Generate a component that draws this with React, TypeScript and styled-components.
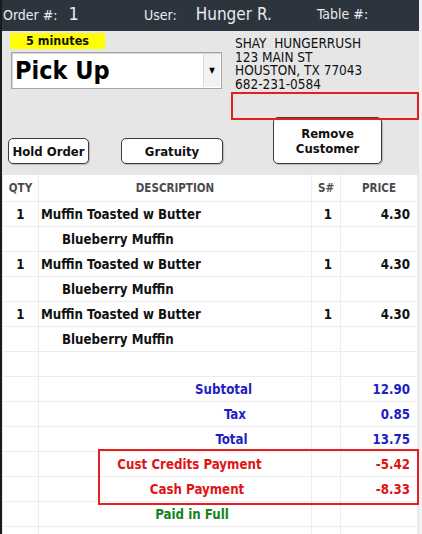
import React from "react";
import styled, { createGlobalStyle } from "styled-components";

const FONT = `"DejaVu Sans Condensed", "DejaVu Sans", Tahoma, sans-serif`;

const GlobalStyle = createGlobalStyle`
  html, body {
    margin: 0;
    padding: 0;
    background: #f2f2f2;
    overflow: hidden;
  }
  body {
    font-family: ${FONT};
    color: #111;
  }
`;

const Frame = styled.div`
  width: 417px;
  height: 534px;
  border-left: 2px solid #1b1b1b;
  background: #e6e6e6;
  display: flex;
  flex-direction: column;
  overflow: hidden;
  & > * {
    flex-shrink: 0;
  }
`;

/* ---------- title bar ---------- */
const TitleBar = styled.div`
  height: 31px;
  background: #2c353e;
  color: #e9ecef;
  display: grid;
  grid-template-columns: 141px 173px 1fr;
  align-items: center;
  padding: 0 0 4px 1px;
  box-sizing: border-box;
`;

const TitleCell = styled.div<{ $gap: number }>`
  display: flex;
  align-items: baseline;
  gap: ${(p) => p.$gap}px;
  white-space: nowrap;
`;

const TitleLabel = styled.span`
  font-size: 14px;
`;

const TitleValue = styled.span<{ $size: number }>`
  font-size: ${(p) => p.$size}px;
`;

/* ---------- order panel ---------- */
const Panel = styled.div`
  padding: 2px 0 0 8px;
  display: flex;
  flex-direction: column;
  height: 144px;
  box-sizing: border-box;
`;

const TopRow = styled.div`
  display: flex;
  align-items: flex-start;
  gap: 13px;
  height: 56px;
`;

const LeftStack = styled.div`
  display: flex;
  flex-direction: column;
  gap: 3px;
  width: 212px;
`;

const TimeBadge = styled.div`
  width: 95px;
  height: 16px;
  background: #ffff00;
  font-weight: bold;
  font-size: 12.5px;
  line-height: 16px;
  text-align: center;
`;

const Combo = styled.div`
  height: 37px;
  margin-left: 1px;
  background: #fff;
  border: 1px solid #a6a6a6;
  box-shadow: inset 1px 1px 0 #d4d4d4;
  display: flex;
  align-items: stretch;
  box-sizing: border-box;
`;

const ComboText = styled.div`
  flex: 1;
  font-size: 25px;
  font-weight: bold;
  line-height: 35px;
  padding-left: 3px;
  color: #000;
`;

const ComboButton = styled.div`
  width: 16px;
  margin: 1px;
  background: #f2f2f2;
  border-left: 1px solid #dadada;
  display: flex;
  align-items: center;
  justify-content: center;
  font-size: 8px;
  color: #000;
`;

const Address = styled.div`
  padding-top: 4px;
  font-size: 13.5px;
  line-height: 13.5px;
  white-space: pre;
  color: #111;
`;

const Highlight = styled.div`
  margin: 3px 0 0 221px;
  width: 188px;
  height: 28px;
  border: 2px solid #e41f1f;
  box-sizing: border-box;
  position: relative;
  z-index: 1;
`;

const ButtonRow = styled.div`
  display: flex;
  align-items: flex-end;
  margin-top: -3px;
`;

const ActionButton = styled.button<{ $w: number; $h: number; $ml: number }>`
  width: ${(p) => p.$w}px;
  height: ${(p) => p.$h}px;
  margin-left: ${(p) => p.$ml}px;
  background: #fff;
  border: 1px solid #3c3c3c;
  border-radius: 5px;
  box-shadow: 1px 1px 1px rgba(0, 0, 0, 0.2);
  font-family: ${FONT};
  font-weight: bold;
  font-size: 13px;
  line-height: 15px;
  color: #111;
  padding: 0;
  text-align: center;
`;

/* ---------- ticket grid ---------- */
const Ticket = styled.div`
  margin-left: 1px;
  width: 415px;
  background: #fff;
  display: flex;
  flex-direction: column;
`;

const Row = styled.div<{ $h?: number }>`
  display: grid;
  grid-template-columns: 36px 273px 29px 77px;
  height: ${(p) => p.$h ?? 25}px;
  flex-shrink: 0;
  box-sizing: border-box;
  border-bottom: 1px solid #ededed;
`;

type Tone = "head" | "item" | "blue" | "red" | "green";
const toneColor: Record<Tone, string> = {
  head: "#4b4b4b",
  item: "#111",
  blue: "#1f1fc4",
  red: "#e01414",
  green: "#15841a",
};

const Cell = styled.div<{
  $align?: "left" | "center" | "right";
  $pl?: number;
  $pr?: number;
  $tone?: Tone;
}>`
  display: flex;
  align-items: center;
  justify-content: ${(p) =>
    p.$align === "right" ? "flex-end" : p.$align === "left" ? "flex-start" : "center"};
  padding-left: ${(p) => p.$pl ?? 0}px;
  padding-right: ${(p) => p.$pr ?? 0}px;
  border-right: 1px solid #ededed;
  font-weight: bold;
  font-size: ${(p) => (p.$tone === "head" ? 11.5 : 13.2)}px;
  color: ${(p) => toneColor[p.$tone ?? "item"]};
  white-space: nowrap;
  overflow: hidden;
`;

const PaymentGroup = styled.div`
  position: relative;
  flex-shrink: 0;
`;

const PaymentBox = styled.div`
  position: absolute;
  left: 95px;
  right: -1px;
  top: -3px;
  bottom: -3px;
  border: 2px solid #e41f1f;
  pointer-events: none;
`;

type Item = { qty: string; name: string; seat: string; price: string; mod: string };
const items: Item[] = [
  { qty: "1", name: "Muffin Toasted w Butter", seat: "1", price: "4.30", mod: "Blueberry Muffin" },
  { qty: "1", name: "Muffin Toasted w Butter", seat: "1", price: "4.30", mod: "Blueberry Muffin" },
  { qty: "1", name: "Muffin Toasted w Butter", seat: "1", price: "4.30", mod: "Blueberry Muffin" },
];

type Line = { label: string; value: string; tone: Tone; pl: number };

const SummaryRow = ({ line }: { line: Line }) => (
  <Row>
    <Cell />
    <Cell $tone={line.tone} $pl={line.pl}>
      {line.label}
    </Cell>
    <Cell />
    <Cell $align="right" $pr={7} $tone={line.tone}>
      {line.value}
    </Cell>
  </Row>
);

const totals: Line[] = [
  { label: "Subtotal", value: "12.90", tone: "blue", pl: 97 },
  { label: "Tax", value: "0.85", tone: "blue", pl: 120 },
  { label: "Total", value: "13.75", tone: "blue", pl: 113 },
];

const payments: Line[] = [
  { label: "Cust Credits Payment", value: "-5.42", tone: "red", pl: 29 },
  { label: "Cash Payment", value: "-8.33", tone: "red", pl: 44 },
];

export default function App() {
  return (
    <>
      <GlobalStyle />
      <Frame>
        <TitleBar>
          <TitleCell $gap={11}>
            <TitleLabel>Order #:</TitleLabel>
            <TitleValue $size={18}>1</TitleValue>
          </TitleCell>
          <TitleCell $gap={19}>
            <TitleLabel>User:</TitleLabel>
            <TitleValue $size={17}>Hunger R.</TitleValue>
          </TitleCell>
          <TitleCell $gap={8}>
            <TitleLabel>Table #:</TitleLabel>
          </TitleCell>
        </TitleBar>

        <Panel>
          <TopRow>
            <LeftStack>
              <TimeBadge>5 minutes</TimeBadge>
              <Combo>
                <ComboText>Pick Up</ComboText>
                <ComboButton>▼</ComboButton>
              </Combo>
            </LeftStack>
            <Address>
              {"SHAY  HUNGERRUSH\n123 MAIN ST\nHOUSTON, TX 77043\n682-231-0584"}
            </Address>
          </TopRow>
          <Highlight />
          <ButtonRow>
            <ActionButton $w={81} $h={26} $ml={-2}>
              Hold Order
            </ActionButton>
            <ActionButton $w={102} $h={26} $ml={32}>
              Gratuity
            </ActionButton>
            <ActionButton $w={109} $h={47} $ml={50}>
              Remove
              <br />
              Customer
            </ActionButton>
          </ButtonRow>
        </Panel>

        <Ticket>
          <Row $h={27}>
            <Cell $tone="head">QTY</Cell>
            <Cell $tone="head">DESCRIPTION</Cell>
            <Cell $tone="head">S#</Cell>
            <Cell $tone="head">PRICE</Cell>
          </Row>
          {items.map((it, i) => (
            <React.Fragment key={i}>
              <Row>
                <Cell>{it.qty}</Cell>
                <Cell $align="left" $pl={2}>
                  {it.name}
                </Cell>
                <Cell $align="right" $pr={8}>
                  {it.seat}
                </Cell>
                <Cell $align="right" $pr={7}>
                  {it.price}
                </Cell>
              </Row>
              <Row>
                <Cell />
                <Cell $align="left" $pl={23}>
                  {it.mod}
                </Cell>
                <Cell />
                <Cell />
              </Row>
            </React.Fragment>
          ))}
          <Row>
            <Cell />
            <Cell />
            <Cell />
            <Cell />
          </Row>
          {totals.map((t) => (
            <SummaryRow key={t.label} line={t} />
          ))}
          <PaymentGroup>
            {payments.map((t) => (
              <SummaryRow key={t.label} line={t} />
            ))}
            <PaymentBox />
          </PaymentGroup>
          <SummaryRow line={{ label: "Paid in Full", value: "", tone: "green", pl: 34 }} />
          <Row>
            <Cell />
            <Cell />
            <Cell />
            <Cell />
          </Row>
        </Ticket>
      </Frame>
    </>
  );
}
